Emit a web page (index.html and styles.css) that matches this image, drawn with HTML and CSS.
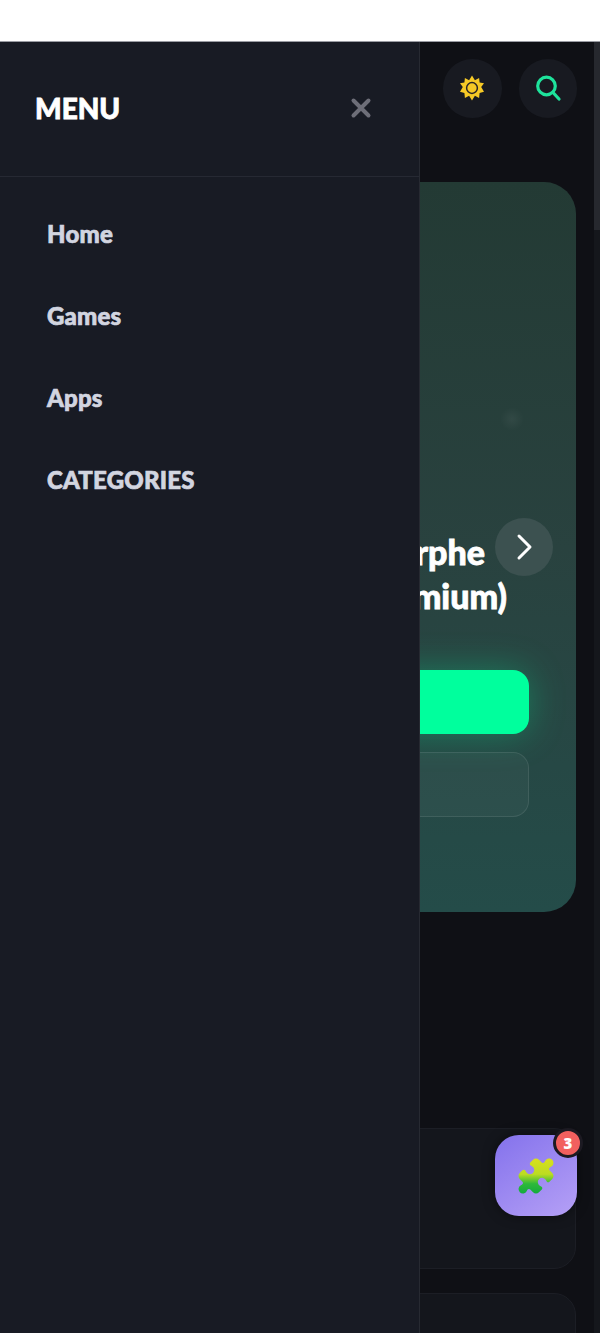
FILE: index.html
```html
<!DOCTYPE html>
<html lang="en">
<head>
<meta charset="utf-8">
<title>Menu</title>
<link rel="stylesheet" href="styles.css">
</head>
<body>
<div class="topbar"></div>
<div class="app">
  <main class="main">
    <header class="header">
      <button class="round-btn" aria-label="Theme">
        <svg width="26" height="26" viewBox="0 0 26 26">
          <polygon class="sun" points="13,0.5 15.9,5.3 20.1,2.9 20.6,7.6 25,8.2 22.2,12 25,16.8 20.6,18 20.1,23.1 15.9,20.7 13,25.5 10.1,20.7 5.9,23.1 5.4,18 1,16.8 3.8,12 1,8.2 5.4,7.6 5.9,2.9 10.1,5.3"/>
          <circle class="sun-ring" cx="13" cy="13" r="5.4"/>
        </svg>
      </button>
      <button class="round-btn" aria-label="Search">
        <svg width="30" height="30" viewBox="0 0 30 30">
          <circle class="search-line" cx="13.5" cy="13" r="8.8"/>
          <path class="search-line" d="M20 19.5 L26 26"/>
        </svg>
      </button>
    </header>
    <section class="hero">
      <div class="hero-spot"></div>
      <button class="hero-arrow" aria-label="Next">
        <svg width="22" height="30" viewBox="0 0 22 30"><path class="arrow-line" d="M6 4 L17 15 L6 26"/></svg>
      </button>
      <h2 class="hero-title">
        <span class="line-one">Morphe</span>
        <span class="line-two">(Premium)</span>
      </h2>
      <div class="hero-actions">
        <div class="btn-primary"></div>
        <div class="btn-secondary"></div>
      </div>
    </section>
    <div class="card card-first"></div>
    <div class="card"></div>
  </main>

  <div class="scrollbar"><div class="scrollbar-thumb"></div></div>

  <aside class="drawer">
    <div class="drawer-head">
      <span class="drawer-title">MENU</span>
      <svg class="close" width="22" height="22" viewBox="0 0 22 22"><path class="close-line" d="M3.5 3.5 L18.5 18.5 M18.5 3.5 L3.5 18.5"/></svg>
    </div>
    <nav class="nav">
      <a class="nav-item">Home</a>
      <a class="nav-item">Games</a>
      <a class="nav-item">Apps</a>
      <a class="nav-item">CATEGORIES</a>
    </nav>
  </aside>

  <div class="fab">
    <svg width="42" height="42" viewBox="0 0 24 24">
      <defs>
        <linearGradient id="puzzle" x1="0" y1="0" x2="0" y2="1">
          <stop offset="0" stop-color="#d9df1e"/>
          <stop offset="0.45" stop-color="#bcdc22"/>
          <stop offset="0.72" stop-color="#2fb93a"/>
          <stop offset="1" stop-color="#13ab3e"/>
        </linearGradient>
      </defs>
      <path fill="url(#puzzle)" d="M19.439 7.85c-.049.322.059.648.289.878l1.568 1.568c.47.47.706 1.087.706 1.704s-.235 1.233-.706 1.704l-1.611 1.611a.98.98 0 0 1-.837.276c-.47-.07-.802-.48-.968-.925a2.501 2.501 0 1 0-3.214 3.214c.446.166.855.497.925.968a.979.979 0 0 1-.276.837l-1.61 1.61a2.404 2.404 0 0 1-1.705.707 2.402 2.402 0 0 1-1.704-.706l-1.568-1.568a1.026 1.026 0 0 0-.877-.29c-.493.074-.84.504-1.02.968a2.5 2.5 0 1 1-3.237-3.237c.464-.18.894-.527.967-1.02a1.026 1.026 0 0 0-.289-.877l-1.568-1.568A2.402 2.402 0 0 1 1.998 12c0-.617.236-1.234.706-1.704L4.23 8.77c.24-.24.581-.353.917-.303.515.077.877.528 1.073 1.01a2.5 2.5 0 1 0 3.259-3.259c-.482-.196-.933-.558-1.01-1.073-.05-.336.062-.676.303-.917l1.525-1.525A2.402 2.402 0 0 1 12 1.998c.617 0 1.234.236 1.704.706l1.568 1.568c.23.23.556.338.877.29.493-.074.84-.504 1.02-.968a2.5 2.5 0 1 1 3.237 3.237c-.464.18-.894.527-.967 1.02Z"/>
    </svg>
    <span class="badge">3</span>
  </div>
</div>
</body>
</html>
```

FILE: styles.css
```css
* { box-sizing: border-box; }
html, body { margin: 0; height: 100%; overflow: hidden; background: #fff; }
body { display: flex; flex-direction: column; font-family: Lato, "Liberation Sans", sans-serif; }

.topbar { flex: none; height: 42px; background: #fff; border-bottom: 1px solid #9a9ca3; }
.app { position: relative; flex: 1; overflow: hidden; background: #0f1015; }

.main { padding: 0 24px; }
.header { display: flex; justify-content: flex-end; gap: 17px; padding-top: 17px; margin-right: -1px; height: 140px; }
.round-btn { width: 58.5px; height: 58.5px; border-radius: 50%; border: 0; padding: 0; background: #181a21; display: flex; align-items: center; justify-content: center; }
.sun { fill: #f6c926; }
.sun-ring { fill: #f6c926; stroke: #2a2526; stroke-width: 1.5; }
.search-line { fill: none; stroke: #1ee39c; stroke-width: 3.2; stroke-linecap: round; }

.hero { position: relative; height: 730px; border-radius: 32px; background: linear-gradient(180deg, #233a34 0%, #29423f 50%, #244c49 100%); display: flex; flex-direction: column; padding: 348px 47px 0; overflow: hidden; }
.hero-spot { position: absolute; left: 476px; top: 225px; width: 24px; height: 24px; border-radius: 50%; background: radial-gradient(circle, rgba(255, 255, 255, 0.05) 0%, rgba(255, 255, 255, 0) 70%); }
.hero-arrow { position: absolute; left: 471px; top: 336px; width: 58px; height: 58px; border-radius: 50%; border: 0; padding: 0; background: #3c5150; display: flex; align-items: center; justify-content: center; }
.arrow-line { fill: none; stroke: #fff; stroke-width: 3; stroke-linecap: round; stroke-linejoin: round; }
.hero-title { margin: 0; font-size: 34px; line-height: 44px; font-weight: 900; color: #fff; text-align: right; -webkit-text-stroke: 0.8px #fff; }
.line-one { display: block; padding-right: 44px; }
.line-two { display: block; padding-right: 22px; }
.hero-actions { display: flex; flex-direction: column; gap: 18px; margin-top: 52px; }
.btn-primary { height: 64px; border-radius: 16px; background: #00ff9d; box-shadow: 0 0 36px rgba(0, 255, 157, 0.3); }
.btn-secondary { height: 65px; border-radius: 16px; background: rgba(255, 255, 255, 0.035); border: 1px solid rgba(255, 255, 255, 0.09); }

.card { height: 141px; border-radius: 22px; background: #14161c; border: 1px solid #1c1e25; margin-bottom: 23px; }
.card-first { margin-top: 216px; margin-bottom: 24px; }

.scrollbar { position: absolute; top: 0; right: 0; bottom: 0; width: 6px; background: #15171c; }
.scrollbar-thumb { height: 188px; background: #26282e; }

.drawer { position: absolute; top: 0; left: 0; bottom: 0; width: 420px; background: #181b24; border-right: 1px solid #272a32; }
.drawer-head { height: 135px; display: flex; align-items: center; justify-content: space-between; padding: 0 47px 2px 35px; border-bottom: 1px solid #262933; }
.drawer-title { font-size: 28px; font-weight: 900; color: #fff; -webkit-text-stroke: 0.8px #fff; }
.close-line { fill: none; stroke: #6d6e78; stroke-width: 4; stroke-linecap: round; }
.nav { display: flex; flex-direction: column; padding: 15px 47px 0; }
.nav-item { height: 82px; display: flex; align-items: center; font-size: 24px; font-weight: 900; color: #d2d5e0; -webkit-text-stroke: 0.7px #d2d5e0; letter-spacing: 0.2px; }

.fab { position: absolute; left: 495px; top: 1093px; width: 82px; height: 81px; border-radius: 24px; background: linear-gradient(145deg, #8472ec 0%, #b5a0f6 100%); display: flex; align-items: center; justify-content: center; box-shadow: 0 0 12px rgba(0, 0, 0, 0.5); }
.badge { position: absolute; right: -6px; top: -7px; width: 30px; height: 30px; border-radius: 50%; background: #f2605f; border: 3px solid #1c1a22; color: #fff; font-size: 15px; font-weight: 900; display: flex; align-items: center; justify-content: center; font-family: "Open Sans", sans-serif; }
```
